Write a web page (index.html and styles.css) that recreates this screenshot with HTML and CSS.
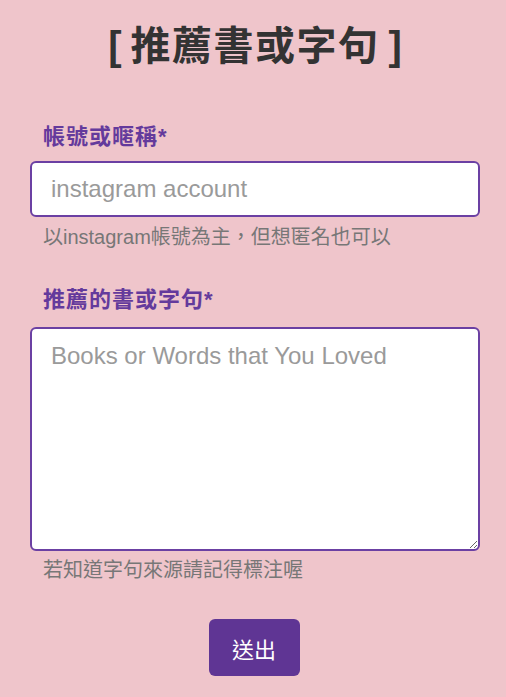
FILE: index.html
```html
<!DOCTYPE html>
<html lang="zh-Hant">
<head>
<meta charset="utf-8">
<link rel="stylesheet" href="styles.css">
</head>
<body>
<main class="page">
  <h1 class="title"><span class="bracket">[</span>推薦書或字句<span class="bracket">]</span></h1>
  <form class="form">
    <label class="field-label label-first" for="account">帳號或暱稱*</label>
    <input class="field-input" id="account" type="text" placeholder="instagram account">
    <p class="help help-first">以instagram帳號為主，但想匿名也可以</p>
    <label class="field-label label-second" for="words">推薦的書或字句*</label>
    <textarea class="field-area" id="words" placeholder="Books or Words that You Loved"></textarea>
    <p class="help help-second">若知道字句來源請記得標注喔</p>
    <div class="actions">
      <button class="submit" type="button">送出</button>
    </div>
  </form>
</main>
</body>
</html>
```
FILE: styles.css
```css
html, body {
  margin: 0;
  padding: 0;
  background: #efc5cb;
}
body {
  font-family: "Liberation Sans", "Noto Sans CJK TC", sans-serif;
  width: 506px;
  height: 697px;
  overflow: hidden;
}
.page {
  padding: 22px 26px 0 30px;
}
.title {
  margin: 0;
  display: flex;
  justify-content: center;
  align-items: center;
  gap: 9px;
  font-size: 40px;
  line-height: 48px;
  font-weight: 700;
  color: #333333;
  letter-spacing: 1.5px;
}
.bracket {
  letter-spacing: 0;
}
.form {
  display: flex;
  flex-direction: column;
}
.field-label {
  display: block;
  padding-left: 13px;
  font-size: 22px;
  line-height: 28px;
  font-weight: 700;
  letter-spacing: 1px;
  color: #643a9c;
}
.label-first { margin-top: 53px; }
.label-second { margin-top: 37px; }
.field-input,
.field-area {
  box-sizing: border-box;
  width: 450px;
  border: 2px solid #6b40a3;
  border-radius: 6px;
  background: #ffffff;
  font-family: "Liberation Sans", "Noto Sans CJK TC", sans-serif;
  font-size: 24px;
  color: #333;
  padding: 0 19px;
  margin: 0;
  outline: none;
}
.field-input {
  height: 56px;
  margin-top: 10px;
}
.field-area {
  height: 224px;
  margin-top: 13px;
  padding-top: 13px;
  resize: vertical;
  line-height: 28px;
}
.field-input::placeholder,
.field-area::placeholder {
  color: #9a9a9a;
  opacity: 1;
}
.help {
  margin: 0;
  padding-left: 13px;
  font-size: 20px;
  line-height: 24px;
  color: #777777;
}
.help-first { margin-top: 8px; }
.help-second { margin-top: 7px; }
.actions {
  display: flex;
  justify-content: center;
  margin-top: 37px;
  padding-right: 2px;
}
.submit {
  width: 91px;
  height: 57px;
  border: none;
  border-radius: 6px;
  background: #5f3594;
  color: #ffffff;
  font-family: "Noto Sans CJK TC", sans-serif;
  font-size: 22px;
  font-weight: 400;
  cursor: pointer;
}
```
